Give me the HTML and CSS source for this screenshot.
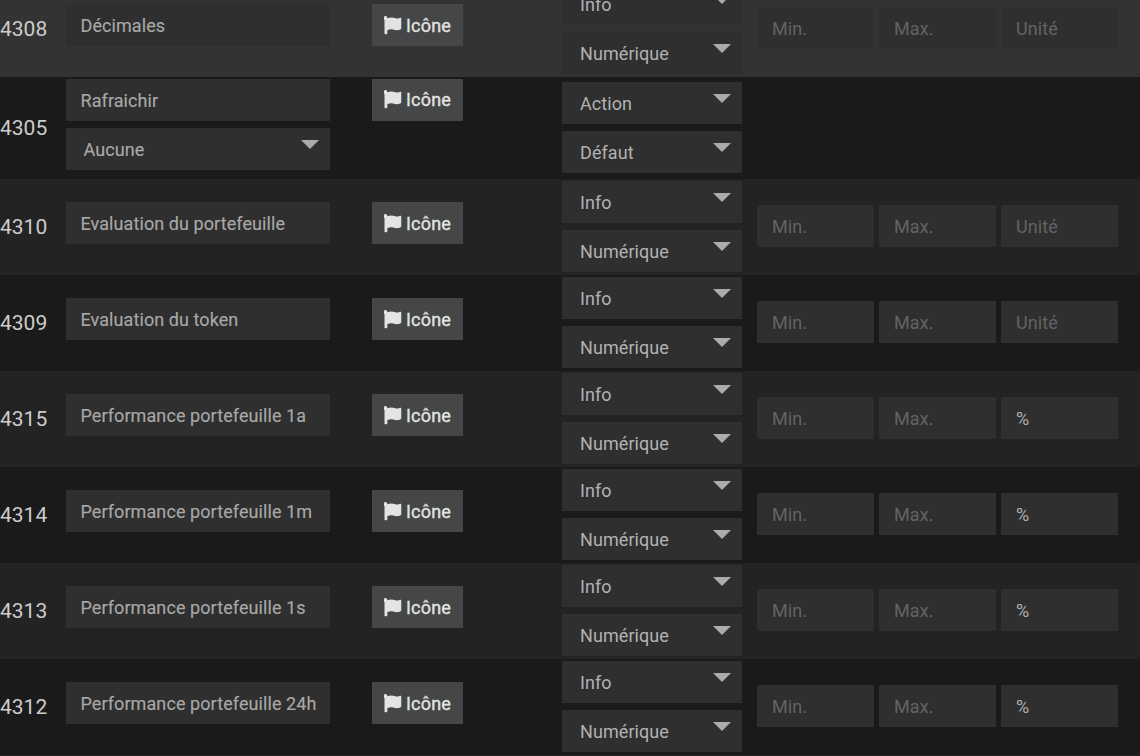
FILE: index.html
```
<!DOCTYPE html>
<html lang="fr">
<head>
<meta charset="utf-8">
<title>Commandes</title>
<link rel="stylesheet" href="styles.css">
</head>
<body>
<svg width="0" height="0" class="defs"><symbol id="flag" viewBox="0 0 18 19"><path d="M1.900 0A2.100 2.100 0 0 1 3.900 2.300C7 1 9.500 1.500 12 2.300C14 2.900 15.600 2.300 17 1.700Q18 1.400 18 2.500V12.200Q18 12.900 17.300 13.300C14.500 14.800 12 14.300 9.500 13.600C7.400 13 5.600 13.500 3.800 14.300V17.500Q3.800 18.300 3 18.300H1.800Q1 18.300 1 17.500V3.900A2.100 2.100 0 0 1 1.900 0Z"/></symbol></svg>
<main class="table" id="table"></main>
<script src="rows.js"></script>
</body>
</html>
```

FILE: styles.css
```
* { box-sizing: border-box; }
html, body { margin: 0; height: 756px; overflow: hidden; background: #232323; }
body { font-family: Roboto, sans-serif; font-size: 18px; color: #b2b2b2; }
.defs { display: block; }
.table { margin-top: -19px; }
.row {
  display: grid;
  grid-template-columns: 66px 264px 42px 91px 99px 180px 15px 361px;
  height: 96px;
  background: #1a1a1a;
}
.row.even { background: #232323; }
.row.hover { background: #333; }
.row.tall { height: 102px; }
.id { align-self: center; font-size: 21px; line-height: 24px; color: #ccc; }
.stack { display: flex; flex-direction: column; gap: 7px; }
.name { grid-column: 2; padding-top: 23px; }
.button-cell { grid-column: 4; padding-top: 23px; }
.types { grid-column: 6; padding-top: 2px; }
.params { grid-column: 8; display: flex; gap: 5px; padding-top: 26px; }
.tall .name, .tall .button-cell { padding-top: 2px; }
.tall .types { padding-top: 5px; }
.field {
  height: 42px;
  line-height: 44px;
  padding-left: 15px;
  background: #2f2f2f;
  white-space: nowrap;
  letter-spacing: 0.08px;
}
.name .field { padding-left: 14.500px; color: #a8a8a8; -webkit-text-stroke: 0.15px #a8a8a8; }
.params .field { width: 117px; }
.field.empty { color: #636363; }
.field.select, .name .field.select {
  display: flex;
  justify-content: space-between;
  padding: 0 11px 0 18px;
}
.name .field.select { padding-left: 17.500px; }
.select::after {
  content: "";
  width: 18px;
  height: 9px;
  margin-top: 12px;
  background: #ababab;
  clip-path: polygon(0 0, 100% 0, 50% 100%);
}
.button {
  display: flex;
  height: 42px;
  padding-left: 12px;
  gap: 4px;
  line-height: 44px;
  letter-spacing: 0.2px;
  -webkit-text-stroke: 0.35px #e3e3e3;
  background: #454648;
  color: #e3e3e3;
}
.tall .button { line-height: 42px; }
.flag { width: 18px; height: 19px; margin-top: 12px; fill: #e3e3e3; stroke: none; }
.flag use { transform: translateX(-0.500px); }
.tall .flag { margin-top: 11px; }
```

FILE: rows.js
```
const rows = [
  { id: 4308, name: "Décimales", types: ["Info", "Numérique"], unit: "", state: "hover" },
  { id: 4305, name: "Rafraichir", value: "Aucune", types: ["Action", "Défaut"], state: "tall" },
  { id: 4310, name: "Evaluation du portefeuille", types: ["Info", "Numérique"], unit: "", state: "even" },
  { id: 4309, name: "Evaluation du token", types: ["Info", "Numérique"], unit: "", state: "" },
  { id: 4315, name: "Performance portefeuille 1a", types: ["Info", "Numérique"], unit: "%", state: "even" },
  { id: 4314, name: "Performance portefeuille 1m", types: ["Info", "Numérique"], unit: "%", state: "" },
  { id: 4313, name: "Performance portefeuille 1s", types: ["Info", "Numérique"], unit: "%", state: "even" },
  { id: 4312, name: "Performance portefeuille 24h", types: ["Info", "Numérique"], unit: "%", state: "" }
];

const select = (text) => `<div class="field select"><span>${text}</span></div>`;

const params = (unit) => `<div class="params">
  <div class="field empty">Min.</div>
  <div class="field empty">Max.</div>
  <div class="field ${unit ? "" : "empty"}">${unit || "Unité"}</div>
</div>`;

document.getElementById("table").innerHTML = rows.map((r) => `<div class="row ${r.state}">
  <div class="id">${r.id}</div>
  <div class="name stack"><div class="field">${r.name}</div>${r.value ? select(r.value) : ""}</div>
  <div class="button-cell"><div class="button"><svg class="flag"><use href="#flag"/></svg><span>Icône</span></div></div>
  <div class="types stack">${r.types.map(select).join("")}</div>
  ${r.unit === undefined ? "" : params(r.unit)}
</div>`).join("");
```
